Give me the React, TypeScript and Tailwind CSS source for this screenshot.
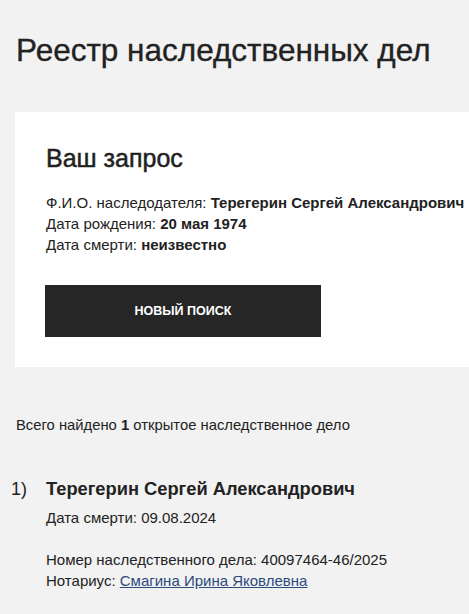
export default function App() {
  return (
    <div className="min-h-[614px] bg-[#f2f2f2] text-[#222] overflow-hidden" style={{ fontFamily: '"Liberation Sans", Arial, sans-serif' }}>
      <h1 className="pl-[16px] pt-[32px] text-[31.5px] leading-[36px] font-normal whitespace-nowrap [-webkit-text-stroke:0.35px_#222]">Реестр наследственных дел</h1>
      <div className="ml-[15px] mt-[44px] w-[480px] bg-white pl-[31px] pt-[32px] pb-[30px]">
        <h2 className="text-[25px] leading-[28px] font-normal [-webkit-text-stroke:0.5px_#222]">Ваш запрос</h2>
        <div className="mt-[20px] text-[15px] leading-[21px] whitespace-nowrap">
          <div>Ф.И.О. наследодателя: <b>Терегерин Сергей Александрович</b></div>
          <div>Дата рождения: <b>20 мая 1974</b></div>
          <div>Дата смерти: <b>неизвестно</b></div>
        </div>
        <button className="mt-[30px] -ml-[1px] w-[276px] h-[52px] bg-[#262626] text-white text-[12.5px] font-bold uppercase">Новый поиск</button>
      </div>
      <div className="pl-[16px] mt-[48px] text-[14.8px] leading-[20px]">Всего найдено <b>1</b> открытое наследственное дело</div>
      <div className="flex mt-[42px]">
        <div className="w-[46px] pl-[11px] text-[18px] leading-[24px]">1)</div>
        <div>
          <div className="text-[18.3px] leading-[24px] font-bold">Терегерин Сергей Александрович</div>
          <div className="mt-[6px] text-[15px] leading-[21px]">Дата смерти: 09.08.2024</div>
          <div className="mt-[21px] text-[15px] leading-[21px]">Номер наследственного дела: 40097464-46/2025</div>
          <div className="text-[15px] leading-[21px]">Нотариус: <a href="#" className="text-[#2b4a7c] underline">Смагина Ирина Яковлевна</a></div>
        </div>
      </div>
    </div>
  );
}
